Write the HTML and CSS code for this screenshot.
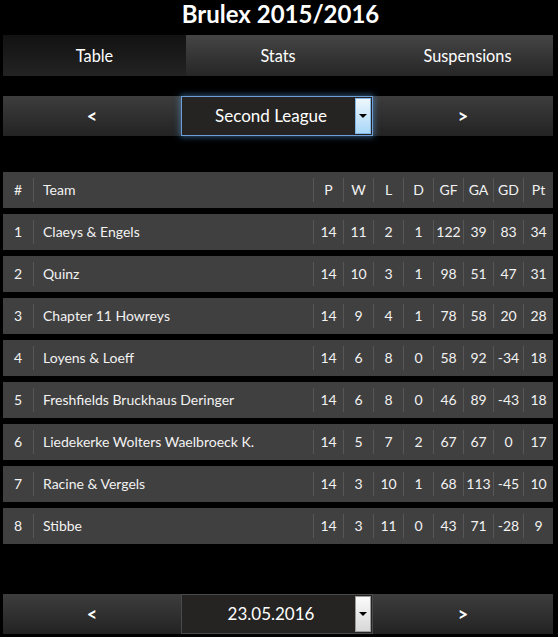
FILE: index.html
```html
<!DOCTYPE html>
<html>
<head>
<meta charset="utf-8">
<link rel="stylesheet" href="styles.css">
</head>
<body>
<div class="page">
  <h1 class="title">Brulex 2015/2016</h1>
  <div class="tabs">
    <div class="tab active">Table</div>
    <div class="tab">Stats</div>
    <div class="tab last">Suspensions</div>
  </div>
  <div class="bar league">
    <div class="nav">&lt;</div>
    <div class="select blue">
      <div class="select-text">Second League</div>
      <div class="drop"><span class="tri"></span></div>
    </div>
    <div class="nav">&gt;</div>
  </div>

  <div class="table">
    <div class="row head">
      <div class="c num">#</div><div class="c team">Team</div>
      <div class="c">P</div><div class="c">W</div><div class="c">L</div><div class="c">D</div><div class="c">GF</div><div class="c">GA</div><div class="c">GD</div><div class="c">Pt</div>
    </div>
    <div class="row">
      <div class="c num">1</div><div class="c team">Claeys &amp; Engels</div>
      <div class="c">14</div><div class="c">11</div><div class="c">2</div><div class="c">1</div><div class="c">122</div><div class="c">39</div><div class="c">83</div><div class="c">34</div>
    </div>
    <div class="row">
      <div class="c num">2</div><div class="c team">Quinz</div>
      <div class="c">14</div><div class="c">10</div><div class="c">3</div><div class="c">1</div><div class="c">98</div><div class="c">51</div><div class="c">47</div><div class="c">31</div>
    </div>
    <div class="row">
      <div class="c num">3</div><div class="c team">Chapter 11 Howreys</div>
      <div class="c">14</div><div class="c">9</div><div class="c">4</div><div class="c">1</div><div class="c">78</div><div class="c">58</div><div class="c">20</div><div class="c">28</div>
    </div>
    <div class="row">
      <div class="c num">4</div><div class="c team">Loyens &amp; Loeff</div>
      <div class="c">14</div><div class="c">6</div><div class="c">8</div><div class="c">0</div><div class="c">58</div><div class="c">92</div><div class="c">-34</div><div class="c">18</div>
    </div>
    <div class="row">
      <div class="c num">5</div><div class="c team">Freshfields Bruckhaus Deringer</div>
      <div class="c">14</div><div class="c">6</div><div class="c">8</div><div class="c">0</div><div class="c">46</div><div class="c">89</div><div class="c">-43</div><div class="c">18</div>
    </div>
    <div class="row">
      <div class="c num">6</div><div class="c team">Liedekerke Wolters Waelbroeck K.</div>
      <div class="c">14</div><div class="c">5</div><div class="c">7</div><div class="c">2</div><div class="c">67</div><div class="c">67</div><div class="c">0</div><div class="c">17</div>
    </div>
    <div class="row">
      <div class="c num">7</div><div class="c team">Racine &amp; Vergels</div>
      <div class="c">14</div><div class="c">3</div><div class="c">10</div><div class="c">1</div><div class="c">68</div><div class="c">113</div><div class="c">-45</div><div class="c">10</div>
    </div>
    <div class="row">
      <div class="c num">8</div><div class="c team">Stibbe</div>
      <div class="c">14</div><div class="c">3</div><div class="c">11</div><div class="c">0</div><div class="c">43</div><div class="c">71</div><div class="c">-28</div><div class="c">9</div>
    </div>
  </div>

  <div class="bar date">
    <div class="nav">&lt;</div>
    <div class="select gray">
      <div class="select-text">23.05.2016</div>
      <div class="drop"><span class="tri"></span></div>
    </div>
    <div class="nav">&gt;</div>
  </div>
</div>
</body>
</html>
```
FILE: styles.css
```css
html, body {
  margin: 0;
  padding: 0;
  background: #000;
}
body {
  font-family: Lato, "Open Sans", sans-serif;
  color: #f2f2f2;
}
.page {
  width: 550px;
  margin-left: 3px;
}
.title {
  margin: 0;
  height: 35px;
  font-size: 24px;
  font-weight: 700;
  line-height: 27px;
  text-align: center;
  color: #fff;
  padding-left: 5px;
  box-sizing: border-box;
}
.tabs {
  display: grid;
  grid-template-columns: 183px 184px 183px;
  height: 41px;
}
.tab {
  display: flex;
  align-items: center;
  justify-content: center;
  font-size: 16.3px;
  color: #fff;
  background: linear-gradient(#454545, #262626);
}
.tab.last {
  padding-left: 12px;
}
.tab.active {
  background: linear-gradient(#121212, #232323);
}
.bar {
  display: grid;
  grid-template-columns: 178px 192px 180px;
  height: 40px;
  background: linear-gradient(#3d3d3d, #232323);
}
.league {
  margin-top: 20px;
}
.date {
  margin-top: 50px;
}
.nav {
  display: flex;
  align-items: center;
  justify-content: center;
  font-size: 18px;
  font-weight: 700;
  color: #fff;
  padding-bottom: 1px;
}
.select {
  display: flex;
  box-sizing: border-box;
  background: #262422;
}
.select-text {
  flex: 1;
  display: flex;
  align-items: center;
  justify-content: center;
  font-size: 17px;
  color: #fff;
  padding-bottom: 2px;
  padding-left: 6px;
}
.select.blue {
  border: 1px solid #6d9fd6;
  box-shadow: 0 0 6px 1px rgba(90, 160, 230, 0.55);
}
.select.blue .drop {
  width: 14px;
  margin: 1px;
  border: 1px solid #7fb6e6;
  background: linear-gradient(#eef7fe, #a9d7f8);
}
.select.gray {
  border: 1px solid #4a4a4a;
}
.select.gray .drop {
  width: 14px;
  margin: 1px;
  border: 1px solid #9a9a9a;
  background: linear-gradient(#fbfbfb, #d8d8d8);
}
.drop {
  display: flex;
  align-items: center;
  justify-content: center;
}
.tri {
  width: 0;
  height: 0;
  border-left: 4px solid transparent;
  border-right: 4px solid transparent;
  border-top: 4px solid #000;
}
.table {
  margin-top: 36px;
  display: flex;
  flex-direction: column;
  gap: 6px;
}
.row {
  display: grid;
  grid-template-columns: 30px 280px repeat(8, 30px);
  height: 36px;
  padding: 6px 0;
  box-sizing: border-box;
  background: #404040;
  font-size: 14px;
  color: #f2f2f2;
}
.c {
  display: flex;
  align-items: center;
  justify-content: center;
  border-left: 1px solid #575757;
  white-space: nowrap;
  padding-bottom: 1px;
}
.c.num {
  border-left: none;
  justify-content: center;
}
.c.team {
  justify-content: flex-start;
  padding-left: 9px;
}
```
